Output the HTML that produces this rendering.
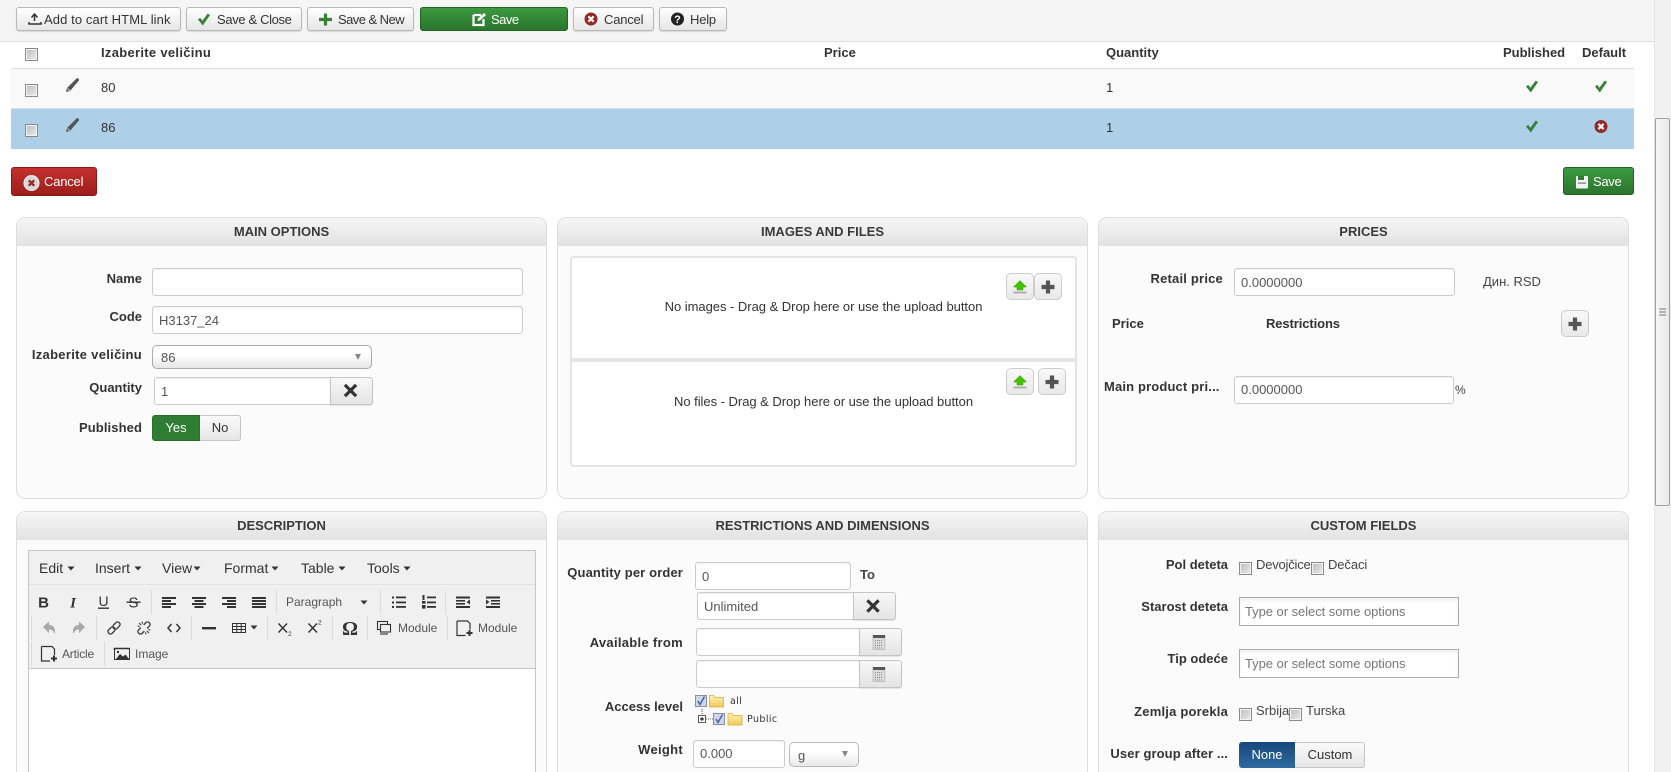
<!DOCTYPE html>
<html><head><meta charset="utf-8"><title>Edit</title>
<style>
html,body{margin:0;padding:0;background:#fff;width:1671px;height:772px;overflow:hidden;}
#w{width:1671px;height:772px;overflow:hidden;position:relative;font-family:"Liberation Sans",sans-serif;font-size:13px;color:#333;}
div{box-sizing:border-box;}
.a{position:absolute;}
.t{position:absolute;white-space:nowrap;line-height:20px;height:20px;}
.b{font-weight:bold;}
.r{text-align:right;left:0;letter-spacing:.2px;}
.c{text-align:center;}
.btn{position:absolute;background:linear-gradient(#fff,#e6e6e6);border:1px solid #b8b8b8;border-radius:3px;box-shadow:0 1px 1px rgba(0,0,0,.12);}
.green{position:absolute;background:linear-gradient(#3c9a40,#2a752d);border:1px solid #236127;border-radius:3px;}
.inp{position:absolute;background:#fff;border:1px solid #ccc;border-radius:3px;box-shadow:inset 0 1px 1px rgba(0,0,0,.06);}
.addon{position:absolute;background:linear-gradient(#f8f8f8,#e4e4e4);border:1px solid #c4c4c4;border-radius:0 3px 3px 0;box-shadow:0 1px 1px rgba(0,0,0,.1);}
.v{color:#555;}
.panel{position:absolute;background:#fbfbfb;border:1px solid #ddd;border-radius:9px;overflow:hidden;}
.open{border-bottom:0;border-radius:9px 9px 0 0;}
.ph{position:absolute;left:0;right:0;top:0;height:28px;background:linear-gradient(#f6f6f6,#e2e2e2);text-align:center;font-weight:bold;line-height:28px;color:#3a3a3a;}
.cb{position:absolute;width:13px;height:13px;border:1px solid #8a8a8a;background:linear-gradient(135deg,#bdbdbd,#ececec);box-shadow:inset 0 0 0 1px #f4f4f4;}
.ib{position:absolute;background:linear-gradient(#f9f9f9,#e8e8e8);border:1px solid #ccc;border-radius:5px;}
.sep{position:absolute;width:1px;height:24px;background:#dcdcdc;}
.w12{font-size:12px;color:#555;}
</style></head><body><div id="w">

<!-- top toolbar -->
<div class="a" style="left:0;top:0;width:1654px;height:42px;background:#f5f5f5;border-bottom:1px solid #ddd"></div>
<div class="btn" style="left:16px;top:7px;width:165px;height:24px"></div>
<div class="btn" style="left:186px;top:7px;width:116px;height:24px"></div>
<div class="btn" style="left:307px;top:7px;width:107px;height:24px"></div>
<div class="green" style="left:420px;top:7px;width:148px;height:24px"></div>
<div class="btn" style="left:573px;top:7px;width:81px;height:24px"></div>
<div class="btn" style="left:659px;top:7px;width:68px;height:24px"></div>
<div class="t" style="left:44px;top:10px;letter-spacing:.1px">Add to cart HTML link</div>
<div class="t" style="left:217px;top:10px;letter-spacing:-.35px">Save &amp; Close</div>
<div class="t" style="left:338px;top:10px;letter-spacing:-.55px">Save &amp; New</div>
<div class="t" style="left:491px;top:10px;color:#fff;letter-spacing:-.5px">Save</div>
<div class="t" style="left:604px;top:10px;letter-spacing:-.2px">Cancel</div>
<div class="t" style="left:690px;top:10px;letter-spacing:-.2px">Help</div>

<!-- table -->
<div class="a" style="left:11px;top:68px;width:1623px;height:1px;background:#ddd"></div>
<div class="a" style="left:11px;top:69px;width:1623px;height:40px;background:#f9f9f9;border-bottom:1px solid #ddd"></div>
<div class="a" style="left:11px;top:109px;width:1623px;height:40px;background:#add0e8"></div>
<div class="t b" style="left:101px;top:43px;letter-spacing:.3px">Izaberite veličinu</div>
<div class="t b" style="left:824px;top:43px">Price</div>
<div class="t b" style="left:1106px;top:43px">Quantity</div>
<div class="t b" style="left:1503px;top:43px">Published</div>
<div class="t b" style="left:1582px;top:43px">Default</div>
<div class="t" style="left:101px;top:78px">80</div>
<div class="t" style="left:1106px;top:78px">1</div>
<div class="t" style="left:101px;top:118px">86</div>
<div class="t" style="left:1106px;top:118px">1</div>
<div class="cb" style="left:25px;top:48px"></div>
<div class="cb" style="left:25px;top:84px"></div>
<div class="cb" style="left:25px;top:124px"></div>

<!-- cancel / save -->
<div class="a" style="left:11px;top:167px;width:86px;height:29px;background:linear-gradient(#c4312e,#9c1f1c);border:1px solid #8a1a18;border-radius:3px"></div>
<div class="t" style="left:44px;top:172px;color:#fff;letter-spacing:-.2px">Cancel</div>
<div class="green" style="left:1563px;top:167px;width:71px;height:28px"></div>
<div class="t" style="left:1593px;top:172px;color:#fff;letter-spacing:-.3px">Save</div>

<!-- panels row 1 -->
<div class="panel" style="left:16px;top:217px;width:531px;height:282px"><div class="ph">MAIN OPTIONS</div></div>
<div class="panel" style="left:557px;top:217px;width:531px;height:282px"><div class="ph">IMAGES AND FILES</div></div>
<div class="panel" style="left:1098px;top:217px;width:531px;height:282px"><div class="ph">PRICES</div></div>

<!-- main options -->
<div class="t b r" style="width:142px;top:269px;letter-spacing:0">Name</div>
<div class="t b r" style="width:142px;top:307px;letter-spacing:0">Code</div>
<div class="t b r" style="width:142px;top:345px;letter-spacing:.3px">Izaberite veličinu</div>
<div class="t b r" style="width:142px;top:378px;letter-spacing:0">Quantity</div>
<div class="t b r" style="width:142px;top:418px;letter-spacing:.1px">Published</div>
<div class="inp" style="left:152px;top:268px;width:371px;height:28px"></div>
<div class="inp" style="left:152px;top:306px;width:371px;height:28px"></div>
<div class="t v" style="left:159px;top:311px">H3137_24</div>
<div class="a" style="left:152px;top:345px;width:220px;height:24px;background:linear-gradient(#fff 40%,#e6e6e6);border:1px solid #aaa;border-radius:5px"></div>
<div class="t v" style="left:161px;top:348px">86</div>
<div class="inp" style="left:154px;top:377px;width:177px;height:28px;border-radius:3px 0 0 3px"></div>
<div class="t v" style="left:161px;top:382px">1</div>
<div class="addon" style="left:330px;top:377px;width:43px;height:28px"></div>
<div class="a" style="left:152px;top:415px;width:48px;height:26px;background:#2f7d32;border-radius:3px 0 0 3px;border:1px solid #2a702d"></div>
<div class="a" style="left:200px;top:415px;width:41px;height:26px;background:linear-gradient(#fafafa,#e6e6e6);border:1px solid #c4c4c4;border-left:0;border-radius:0 3px 3px 0"></div>
<div class="t c" style="left:152px;width:48px;top:418px;color:#fff">Yes</div>
<div class="t c" style="left:200px;width:40px;top:418px">No</div>

<!-- images and files -->
<div class="a" style="left:570px;top:256px;width:507px;height:211px;background:#fff;border:2px solid #e4e4e4;border-radius:4px"></div>
<div class="a" style="left:571px;top:358px;width:505px;height:4px;background:#e4e4e4"></div>
<div class="t c" style="left:570px;width:507px;top:297px;letter-spacing:-.03px">No images - Drag &amp; Drop here or use the upload button</div>
<div class="t c" style="left:570px;width:507px;top:392px;letter-spacing:-.03px">No files - Drag &amp; Drop here or use the upload button</div>
<div class="ib" style="left:1006px;top:273px;width:28px;height:27px"></div>
<div class="ib" style="left:1034px;top:273px;width:28px;height:27px"></div>
<div class="ib" style="left:1006px;top:368px;width:28px;height:27px"></div>
<div class="ib" style="left:1038px;top:368px;width:28px;height:27px"></div>

<!-- prices -->
<div class="t b r" style="width:1223px;top:269px">Retail price</div>
<div class="inp" style="left:1234px;top:268px;width:221px;height:28px"></div>
<div class="t v" style="left:1241px;top:273px">0.0000000</div>
<div class="t" style="left:1483px;top:272px;color:#444">Дин. RSD</div>
<div class="t b" style="left:1112px;top:314px">Price</div>
<div class="t b" style="left:1266px;top:314px;letter-spacing:-.1px">Restrictions</div>
<div class="ib" style="left:1561px;top:310px;width:28px;height:27px"></div>
<div class="t b" style="left:1104px;top:377px;letter-spacing:.15px">Main product pri...</div>
<div class="inp" style="left:1234px;top:376px;width:220px;height:28px"></div>
<div class="t v" style="left:1241px;top:380px">0.0000000</div>
<div class="t" style="left:1455px;top:380px;color:#444;font-size:12px">%</div>

<!-- panels row 2 -->
<div class="panel open" style="left:16px;top:511px;width:531px;height:261px"><div class="ph">DESCRIPTION</div></div>
<div class="panel open" style="left:557px;top:511px;width:531px;height:261px"><div class="ph">RESTRICTIONS AND DIMENSIONS</div></div>
<div class="panel open" style="left:1098px;top:511px;width:531px;height:261px"><div class="ph">CUSTOM FIELDS</div></div>

<!-- editor -->
<div class="a" style="left:28px;top:550px;width:508px;height:222px;background:#fff;border:1px solid #c5c5c5;border-bottom:0"></div>
<div class="a" style="left:29px;top:551px;width:506px;height:34px;background:#f0f0f0;border-bottom:1px solid #e2e2e2"></div>
<div class="a" style="left:29px;top:585px;width:506px;height:84px;background:#f0f0f0;border-bottom:1px solid #c5c5c5"></div>
<div class="t" style="left:39px;top:558px;font-size:14px">Edit</div>
<div class="t" style="left:95px;top:558px;font-size:14px">Insert</div>
<div class="t" style="left:162px;top:558px;font-size:14px">View</div>
<div class="t" style="left:224px;top:558px;font-size:14px">Format</div>
<div class="t" style="left:301px;top:558px;font-size:14px">Table</div>
<div class="t" style="left:367px;top:558px;font-size:14px">Tools</div>
<div class="sep" style="left:151px;top:590px"></div>
<div class="sep" style="left:276px;top:590px"></div>
<div class="sep" style="left:380px;top:590px"></div>
<div class="sep" style="left:445px;top:590px"></div>
<div class="sep" style="left:31px;top:616px"></div>
<div class="sep" style="left:96px;top:616px"></div>
<div class="sep" style="left:191px;top:616px"></div>
<div class="sep" style="left:267px;top:616px"></div>
<div class="sep" style="left:332px;top:616px"></div>
<div class="sep" style="left:367px;top:616px"></div>
<div class="sep" style="left:447px;top:616px"></div>
<div class="sep" style="left:31px;top:642px"></div>
<div class="sep" style="left:104px;top:642px"></div>
<div class="t w12" style="left:286px;top:592px">Paragraph</div>
<div class="t w12" style="left:398px;top:618px">Module</div>
<div class="t w12" style="left:478px;top:618px">Module</div>
<div class="t w12" style="left:62px;top:644px;letter-spacing:-.2px">Article</div>
<div class="t w12" style="left:135px;top:644px">Image</div>

<!-- restrictions -->
<div class="t b r" style="width:683px;top:563px;letter-spacing:.13px">Quantity per order</div>
<div class="inp" style="left:695px;top:562px;width:156px;height:28px"></div>
<div class="t v" style="left:702px;top:567px">0</div>
<div class="t" style="left:860px;top:565px;font-weight:bold;color:#444">To</div>
<div class="inp" style="left:697px;top:592px;width:157px;height:28px;border-radius:3px 0 0 3px"></div>
<div class="t v" style="left:704px;top:597px">Unlimited</div>
<div class="addon" style="left:853px;top:592px;width:43px;height:28px"></div>
<div class="t b r" style="width:683px;top:633px;letter-spacing:.3px">Available from</div>
<div class="inp" style="left:696px;top:628px;width:164px;height:28px;border-radius:3px 0 0 3px"></div>
<div class="addon" style="left:859px;top:628px;width:43px;height:28px"></div>
<div class="inp" style="left:696px;top:660px;width:164px;height:28px;border-radius:3px 0 0 3px"></div>
<div class="addon" style="left:859px;top:660px;width:43px;height:28px"></div>
<div class="t b r" style="width:683px;top:697px;letter-spacing:0">Access level</div>
<div class="t" style="left:730px;top:690px;font-family:'DejaVu Sans',sans-serif;font-size:9.5px;letter-spacing:.4px;margin-top:2px">all</div>
<div class="t" style="left:747px;top:708px;font-family:'DejaVu Sans',sans-serif;font-size:9.5px;letter-spacing:.4px;margin-top:2px">Public</div>
<div class="t b r" style="width:683px;top:740px;letter-spacing:.3px">Weight</div>
<div class="inp" style="left:693px;top:740px;width:92px;height:28px"></div>
<div class="t v" style="left:700px;top:744px">0.000</div>
<div class="a" style="left:789px;top:742px;width:70px;height:25px;background:linear-gradient(#fff 40%,#e8e8e8);border:1px solid #bbb;border-radius:5px"></div>
<div class="t v" style="left:798px;top:746px">g</div>

<!-- custom fields -->
<div class="t b r" style="width:1228px;top:555px;letter-spacing:0">Pol deteta</div>
<div class="cb" style="left:1239px;top:562px"></div>
<div class="t" style="left:1256px;top:555px;color:#444;letter-spacing:-.2px">Devojčice</div>
<div class="cb" style="left:1311px;top:562px"></div>
<div class="t" style="left:1328px;top:555px;color:#444;letter-spacing:-.1px">Dečaci</div>
<div class="t b r" style="width:1228px;top:597px;letter-spacing:0">Starost deteta</div>
<div class="a" style="left:1239px;top:597px;width:220px;height:29px;background:#fff;border:1px solid #aaa;box-shadow:inset 0 3px 5px rgba(0,0,0,.05)"></div>
<div class="t" style="left:1245px;top:602px;color:#777;font-size:13px;letter-spacing:-.05px">Type or select some options</div>
<div class="t b r" style="width:1228px;top:649px;letter-spacing:0">Tip odeće</div>
<div class="a" style="left:1239px;top:649px;width:220px;height:29px;background:#fff;border:1px solid #aaa;box-shadow:inset 0 3px 5px rgba(0,0,0,.05)"></div>
<div class="t" style="left:1245px;top:654px;color:#777;font-size:13px;letter-spacing:-.05px">Type or select some options</div>
<div class="t b r" style="width:1228px;top:702px">Zemlja porekla</div>
<div class="cb" style="left:1239px;top:708px"></div>
<div class="t" style="left:1256px;top:701px;color:#444">Srbija</div>
<div class="cb" style="left:1289px;top:708px"></div>
<div class="t" style="left:1306px;top:701px;color:#444">Turska</div>
<div class="t b r" style="width:1228px;top:744px;letter-spacing:.1px">User group after ...</div>
<div class="a" style="left:1239px;top:742px;width:56px;height:26px;background:linear-gradient(#17477c,#2f6a9e);border-radius:3px 0 0 3px"></div>
<div class="a" style="left:1295px;top:742px;width:70px;height:26px;background:linear-gradient(#fafafa,#e6e6e6);border:1px solid #c4c4c4;border-left:0;border-radius:0 3px 3px 0"></div>
<div class="t c" style="left:1239px;width:56px;top:745px;color:#fff">None</div>
<div class="t c" style="left:1295px;width:70px;top:745px">Custom</div>

<!-- scrollbar -->
<div class="a" style="left:1654px;top:0;width:17px;height:772px;background:#f1f1f1;border-left:1px solid #e4e4e4"></div>
<div class="a" style="left:1655px;top:118px;width:15px;height:388px;background:linear-gradient(90deg,#f6f6f6,#e9e9e9);border:1px solid #a0a0a0;border-radius:2px"></div>

<!-- icons -->
<svg class="a" style="left:0;top:0" width="1671" height="772" viewBox="0 0 1671 772">
<defs>
<linearGradient id="fo" x1="0" y1="0" x2="0" y2="1"><stop offset="0" stop-color="#fff3b8"/><stop offset="1" stop-color="#f1c84f"/></linearGradient>
<g id="check"><path d="M-6,0 L-3.8,-1.6 L-1.6,1.2 L3.8,-6 L6,-4.4 L-1.2,6 Z"/></g>
<g id="xc"><circle r="6.5"/><path d="M-2.6,-2.6 L2.6,2.6 M2.6,-2.6 L-2.6,2.6" stroke="#fff" stroke-width="2.2"/></g>
<g id="pen"><path d="M-7,7 L-6,3 L3.5,-6.5 Q4.5,-7.3 5.5,-6.3 Q6.5,-5.3 5.7,-4.3 L-3,6 Z" fill="#555"/><path d="M-5.5,3.4 L-3,6" stroke="#f5f5f5" stroke-width=".7"/></g>
<g id="bigx"><path d="M-4.5,-4.5 L4.5,4.5 M4.5,-4.5 L-4.5,4.5" stroke="#333" stroke-width="3.2" stroke-linecap="square"/></g>
<g id="plus"><path d="M-6.5,0 H6.5 M0,-6.5 V6.5" stroke="#555" stroke-width="4.2"/></g>
<g id="up"><path d="M0,-6.5 L6.5,0 H3 V3 H-3 V0 H-6.5 Z" fill="#3fc400" stroke="#2f9c00" stroke-width=".5"/><rect x="-6.5" y="4.5" width="13" height="2" fill="#aab0a8"/></g>
<g id="cal"><rect x="-6" y="-6.5" width="12" height="14" fill="#dcdcdc" stroke="#aaa" stroke-width=".6"/><rect x="-6" y="-7" width="12" height="3" fill="#555"/><path d="M-4,-1.5 H4 M-4,1 H4 M-4,3.5 H4 M-4,6 H4" stroke="#888" stroke-dasharray="1 1"/></g>
<g id="doc"><path d="M-7.5,-7 H3 L5.5,-4.5 V1.5 M-7.5,-7 V7.5 H1" fill="none" stroke="#333" stroke-width="1.2"/><path d="M5,2 V8 M2,5 H8" stroke="#333" stroke-width="2"/></g>
<g id="tri"><path d="M-3.5,-2 H3.5 L0,2 Z"/></g>
<g id="fold"><path d="M.5,2 H4.5 L6,4 H14.5 V13.5 H.5 Z" fill="url(#fo)" stroke="#d8ad3c" stroke-width=".8" stroke-linejoin="round"/></g>
<g id="ckd"><rect x=".5" y=".5" width="11" height="11" fill="#cfd6e8" stroke="#8a8f9c"/><path d="M3,6 L5,9.5 L9.5,1.5" fill="none" stroke="#4a66a8" stroke-width="1.5"/></g>
</defs>

<!-- toolbar icons -->
<path d="M34.5,21 V15 M31.5,17.5 L34.5,14 L37.5,17.5 M29,22 V24 H41 V22" fill="none" stroke="#333" stroke-width="1.5"/>
<use href="#check" x="204" y="19.5" fill="#378137"/>
<path d="M319,19.5 H332 M325.5,13.5 V25.5" stroke="#378137" stroke-width="3.2"/>
<path d="M473.5,15 H481 M473.5,15 V25 H483.5 V19" fill="none" stroke="#fff" stroke-width="2.2"/><path d="M477.5,21 L478,18.5 L484,13 L486,15 L480,20.5 Z" fill="#fff"/>
<use href="#xc" x="591" y="19" fill="#942a25"/>
<circle cx="677.5" cy="19" r="6.5" fill="#222"/><text x="677.5" y="23" text-anchor="middle" fill="#fff" font-size="11" font-weight="bold" font-family="Liberation Sans">?</text>

<!-- table icons -->
<use href="#pen" x="73" y="85"/><use href="#pen" x="73" y="125"/>
<use href="#check" x="1532" y="86.5" fill="#378137"/><use href="#check" x="1601" y="86.5" fill="#378137"/>
<use href="#check" x="1532" y="126.5" fill="#378137"/><use href="#xc" x="1601" y="126.5" fill="#942a25"/>

<!-- cancel/save -->
<circle cx="31.5" cy="183" r="7.5" fill="#d8d8d8" stroke="#f4f4f4" stroke-width="1"/><path d="M28.8,180.3 L34.2,185.7 M34.2,180.3 L28.8,185.7" stroke="#a02622" stroke-width="2.4"/>
<rect x="1576" y="176" width="12" height="12.5" rx="1" fill="#f2f2f2"/><rect x="1578" y="176" width="6" height="4" fill="#2e7d32"/><rect x="1578" y="182.5" width="8" height="1.2" fill="#777"/>

<!-- select arrows -->
<path d="M355,354 H361 L358,360 Z" fill="#888"/>
<path d="M842,751 H848 L845,757 Z" fill="#888"/>

<use href="#bigx" x="350.5" y="390.5"/>
<use href="#bigx" x="873" y="606"/>
<use href="#cal" x="879" y="642"/>
<use href="#cal" x="879" y="674"/>

<use href="#up" x="1020" y="287"/><use href="#plus" x="1048" y="287"/>
<use href="#up" x="1020" y="382"/><use href="#plus" x="1052" y="382"/>
<use href="#plus" x="1575" y="324"/>

<!-- menu arrows -->
<g fill="#333">
<use href="#tri" x="71" y="568.5"/><use href="#tri" x="138" y="568.5"/><use href="#tri" x="197" y="568.5"/><use href="#tri" x="275" y="568.5"/><use href="#tri" x="342" y="568.5"/><use href="#tri" x="407" y="568.5"/>
<use href="#tri" x="364" y="602.5"/><use href="#tri" x="254" y="627.5"/>
</g>

<!-- format row -->
<text x="43.5" y="607.5" text-anchor="middle" font-family="Liberation Sans" font-weight="bold" font-size="15" fill="#333">B</text>
<text x="73" y="607.5" text-anchor="middle" font-family="Liberation Serif" font-style="italic" font-weight="bold" font-size="15" fill="#333">I</text>
<text x="103.5" y="606" text-anchor="middle" font-family="Liberation Sans" font-size="14" fill="#333">U</text><rect x="98" y="607.5" width="11" height="1.4" fill="#333"/>
<text x="133.5" y="607.5" text-anchor="middle" font-family="Liberation Sans" font-size="15" fill="#333">S</text><rect x="126.5" y="601.5" width="14" height="1.4" fill="#333"/>
<g fill="#333">
<g transform="translate(169,602)"><rect x="-7" y="-5" width="14" height="2"/><rect x="-7" y="-2" width="9" height="2"/><rect x="-7" y="1" width="14" height="2"/><rect x="-7" y="4" width="9" height="2"/></g>
<g transform="translate(199,602)"><rect x="-7" y="-5" width="14" height="2"/><rect x="-4.5" y="-2" width="9" height="2"/><rect x="-7" y="1" width="14" height="2"/><rect x="-4.5" y="4" width="9" height="2"/></g>
<g transform="translate(229,602)"><rect x="-7" y="-5" width="14" height="2"/><rect x="-2" y="-2" width="9" height="2"/><rect x="-7" y="1" width="14" height="2"/><rect x="-2" y="4" width="9" height="2"/></g>
<g transform="translate(259,602)"><rect x="-7" y="-5" width="14" height="2"/><rect x="-7" y="-2" width="14" height="2"/><rect x="-7" y="1" width="14" height="2"/><rect x="-7" y="4" width="14" height="2"/></g>
<!-- bullets -->
<g transform="translate(399,602)"><rect x="-7" y="-5.5" width="2" height="2"/><rect x="-7" y="-.5" width="2" height="2"/><rect x="-7" y="4" width="2" height="2"/><rect x="-3" y="-5.5" width="10" height="1.8"/><rect x="-3" y="-.5" width="10" height="1.8"/><rect x="-3" y="4" width="10" height="1.8"/></g>
<g transform="translate(429,602)"><rect x="-2" y="-5.5" width="9" height="1.8"/><rect x="-2" y="-.5" width="9" height="1.8"/><rect x="-2" y="4" width="9" height="1.8"/><rect x="-6.5" y="-7" width="2" height="5"/><rect x="-7" y="-1" width="3.5" height="2.6"/><rect x="-7" y="3" width="3.5" height="3.6"/></g>
<g transform="translate(463,602)"><rect x="-7" y="-5.5" width="14" height="2"/><rect x="-7" y="-2" width="9" height="1.6"/><rect x="-7" y="1" width="9" height="1.6"/><rect x="-7" y="4" width="14" height="2"/><path d="M7,-2.5 V2.5 L3.5,0 Z"/></g>
<g transform="translate(493,602)"><rect x="-7" y="-5.5" width="14" height="2"/><rect x="-2" y="-2" width="9" height="1.6"/><rect x="-2" y="1" width="9" height="1.6"/><rect x="-7" y="4" width="14" height="2"/><path d="M-7,-2.5 V2.5 L-3.5,0 Z"/></g>
</g>

<!-- row 2 -->
<path d="M43,627 L49,621.5 V625 C54,625 56,629 54.5,634 C53.5,631 52,629.5 49,629.5 V633 Z" fill="#a8a8a8"/>
<path d="M85,627 L79,621.5 V625 C74,625 72,629 73.5,634 C74.5,631 76,629.5 79,629.5 V633 Z" fill="#a8a8a8"/>
<g fill="none" stroke="#444" stroke-width="1.4" transform="translate(114,628) rotate(-45)"><rect x="-7.5" y="-2.5" width="8" height="5" rx="2.5"/><rect x="-.5" y="-2.5" width="8" height="5" rx="2.5"/></g>
<g fill="none" stroke="#444" stroke-width="1.4" transform="translate(144,628) rotate(-45)"><path d="M-2,-2.5 H-5 A2.5,2.5 0 0 0 -5,2.5 H-2"/><path d="M2,-2.5 H5 A2.5,2.5 0 0 1 5,2.5 H2"/><path d="M0,-7 V-4 M0,4 V7 M-3,-6 L-2,-4 M3,6 L2,4 M3,-6 L2,-4 M-3,6 L-2,4" stroke-width="1.1"/></g>
<path d="M171.5,624 L168,628 L171.5,632 M176.5,624 L180,628 L176.5,632" fill="none" stroke="#333" stroke-width="1.5"/>
<rect x="202" y="627" width="14" height="2.4" fill="#333"/>
<g fill="none" stroke="#333" stroke-width="1"><rect x="232.5" y="623.5" width="13" height="9"/><path d="M232.5,626.5 H245.5 M232.5,629.5 H245.5 M236.8,623.5 V632.5 M241.2,623.5 V632.5"/></g>
<path d="M278.5,623.5 L287,632.5 M287,623.5 L278.5,632.5" stroke="#333" stroke-width="1.5"/>
<text x="288" y="636" font-size="6.5" font-family="Liberation Sans" fill="#333">2</text>
<path d="M308.5,623.5 L317,632.5 M317,623.5 L308.5,632.5" stroke="#333" stroke-width="1.5"/>
<text x="318" y="624.5" font-size="6.5" font-family="Liberation Sans" fill="#333">2</text>
<text x="350" y="635" text-anchor="middle" font-family="Liberation Serif" font-weight="bold" font-size="20" fill="#333">Ω</text>
<g fill="none" stroke="#333" stroke-width="1.1"><rect x="377.5" y="621.5" width="10" height="8"/><rect x="380.5" y="624.5" width="10" height="7.5" fill="#f0f0f0"/><path d="M380,634 H388"/></g>
<use href="#doc" x="464.5" y="628"/>
<use href="#doc" x="49" y="653.5"/>
<g><rect x="114.5" y="648.5" width="15" height="11" fill="none" stroke="#333"/><path d="M114.5,650 V648.5 H129.5" fill="none" stroke="#333" stroke-width="1.6"/><path d="M116,659 L120,654 L123,656.5 L125.5,654.5 L129,659 Z" fill="#333"/><rect x="117" y="651" width="2" height="2" fill="#333"/></g>

<!-- tree -->
<use href="#ckd" x="695" y="695"/>
<use href="#fold" x="709" y="693.5"/>
<path d="M702,709 V715" stroke="#555" stroke-dasharray="1 1"/>
<rect x="698.5" y="715.5" width="7" height="7" fill="#fff" stroke="#333" stroke-width=".8"/><path d="M700,719 H704 M702,717 V721" stroke="#000" stroke-width=".9"/>
<path d="M706,719 H713" stroke="#777" stroke-dasharray="1 1"/>
<use href="#ckd" x="713" y="713"/>
<use href="#fold" x="727.5" y="711.5"/>

<!-- scroll grip -->
<path d="M1659,309 H1666 M1659,312 H1666 M1659,315 H1666" stroke="#777"/>
</svg>
</div></body></html>
